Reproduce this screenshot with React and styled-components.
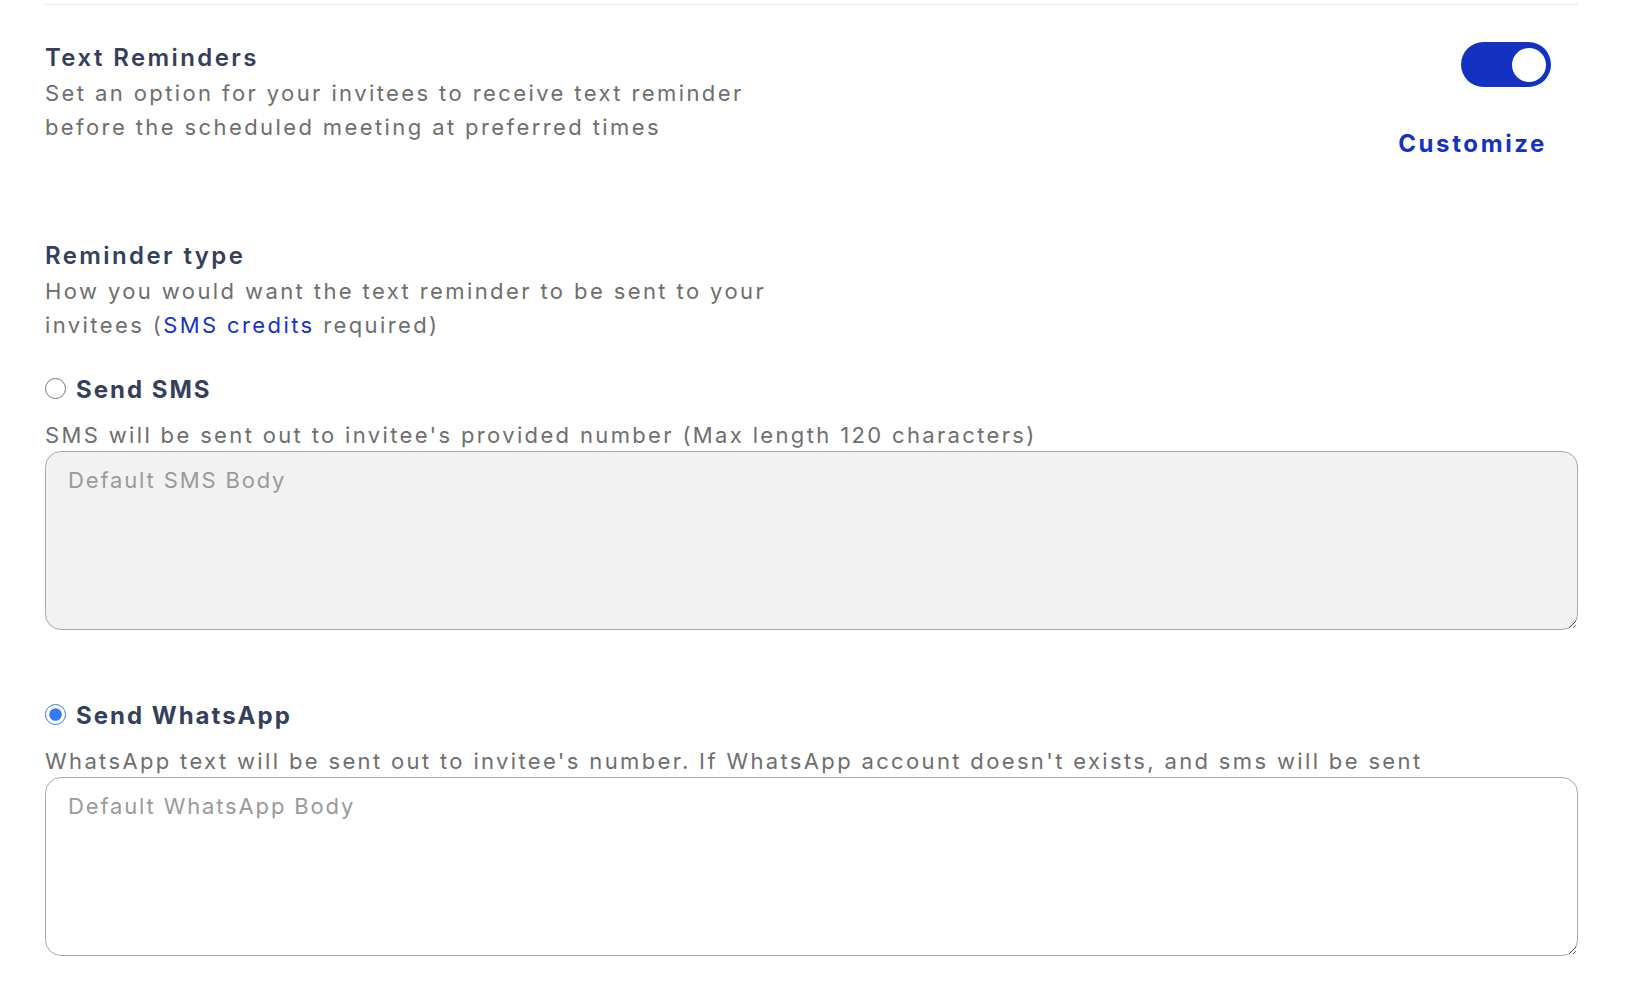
import React, { useState } from "react"
import styled, { createGlobalStyle } from "styled-components"

const GlobalStyle = createGlobalStyle`
    body {
        margin: 0;
        background: #ffffff;
        font-family: Inter, "Liberation Sans", sans-serif;
    }
`

const Page = styled.div`
    padding: 4px 62px 0 45px;
`

const Divider = styled.div`
    border-top: 1px solid #e8e8e8;
`

const HeaderRow = styled.div`
    display: flex;
    justify-content: space-between;
    align-items: flex-start;
    padding-top: 37px;
`

const Section = styled.div`
    margin-top: ${prop => prop.top || 0}px;
`

const Title = styled.h2`
    margin: 0;
    font-size: 24px;
    line-height: 32px;
    font-weight: 600;
    letter-spacing: 2.4px;
    color: #353f5c;
`

const Description = styled.p`
    margin: 2px 0 0;
    max-width: 780px;
    font-size: 22px;
    line-height: 34px;
    font-weight: 400;
    letter-spacing: 2.4px;
    color: #6e6e6e;
`

const Link = styled.a`
    color: #1433c6;
    text-decoration: none;
    cursor: pointer;
`

const SideColumn = styled.div`
    display: flex;
    flex-direction: column;
    align-items: flex-end;
    padding-right: 27px;
`

const Toggle = styled.button`
    display: flex;
    align-items: center;
    justify-content: ${prop => prop.on ? "flex-end" : "flex-start"};
    width: 90px;
    height: 45px;
    padding: 0 5px;
    border: none;
    border-radius: 23px;
    background: ${prop => prop.on ? "#1432c2" : "#c9ccd6"};
    cursor: pointer;
`

const Knob = styled.span`
    width: 34px;
    height: 34px;
    border-radius: 50%;
    background: #ffffff;
`

const CustomizeButton = styled.button`
    margin: 41px 4px 0 0;
    padding: 0;
    border: none;
    background: none;
    font-family: inherit;
    font-size: 24px;
    line-height: 32px;
    font-weight: 700;
    letter-spacing: 2.6px;
    color: #1432c4;
    cursor: pointer;
`

const Option = styled.div`
    margin-top: ${prop => prop.top}px;
`

const OptionLabel = styled.label`
    display: flex;
    align-items: center;
    gap: 10px;
    font-size: 24px;
    line-height: 32px;
    font-weight: 700;
    letter-spacing: 2px;
    color: #353f5c;
    cursor: pointer;
`

const Radio = styled.input`
    width: 21px;
    height: 21px;
    margin: 0 0 3px 0;
    accent-color: #3478f6;
`

const OptionHint = styled.p`
    margin: 13px 0 0;
    font-size: 22px;
    line-height: 32px;
    letter-spacing: 2.35px;
    color: #6e6e6e;
`

const Body = styled.textarea`
    display: block;
    box-sizing: border-box;
    width: 100%;
    height: 179px;
    margin: 0;
    padding: 12px 22px;
    border: 1px solid #a9a9a9;
    border-radius: 16px;
    background: ${prop => prop.muted ? "#f2f2f2" : "#ffffff"};
    font-family: inherit;
    font-size: 22px;
    line-height: 32px;
    letter-spacing: 1.85px;
    color: #353f5c;
    outline: none;

    &::placeholder {
        color: #9a9a9a;
    }
`

function App() {
    const [enabled, setEnabled] = useState(true)
    const [channel, setChannel] = useState("whatsapp")

    return (
        <Page>
            <GlobalStyle />
            <Divider />
            <HeaderRow>
                <div>
                    <Title>Text Reminders</Title>
                    <Description>
                        Set an option for your invitees to receive text reminder before the scheduled meeting at preferred times
                    </Description>
                </div>
                <SideColumn>
                    <Toggle on={enabled ? 1 : 0} role="switch" aria-checked={enabled} onClick={() => setEnabled(!enabled)}>
                        <Knob />
                    </Toggle>
                    <CustomizeButton>Customize</CustomizeButton>
                </SideColumn>
            </HeaderRow>

            <Section top={80}>
                <Title>Reminder type</Title>
                <Description>
                    How you would want the text reminder to be sent to your invitees (<Link>SMS credits</Link> required)
                </Description>
            </Section>

            <Option top={32}>
                <OptionLabel>
                    <Radio type="radio" name="channel" checked={channel === "sms"} onChange={() => setChannel("sms")} />
                    Send SMS
                </OptionLabel>
                <OptionHint>SMS will be sent out to invitee's provided number (Max length 120 characters)</OptionHint>
                <Body muted placeholder="Default SMS Body" />
            </Option>

            <Option top={70}>
                <OptionLabel>
                    <Radio type="radio" name="channel" checked={channel === "whatsapp"} onChange={() => setChannel("whatsapp")} />
                    Send WhatsApp
                </OptionLabel>
                <OptionHint>WhatsApp text will be sent out to invitee's number. If WhatsApp account doesn't exists, and sms will be sent</OptionHint>
                <Body placeholder="Default WhatsApp Body" />
            </Option>
        </Page>
    )
}

export default App
